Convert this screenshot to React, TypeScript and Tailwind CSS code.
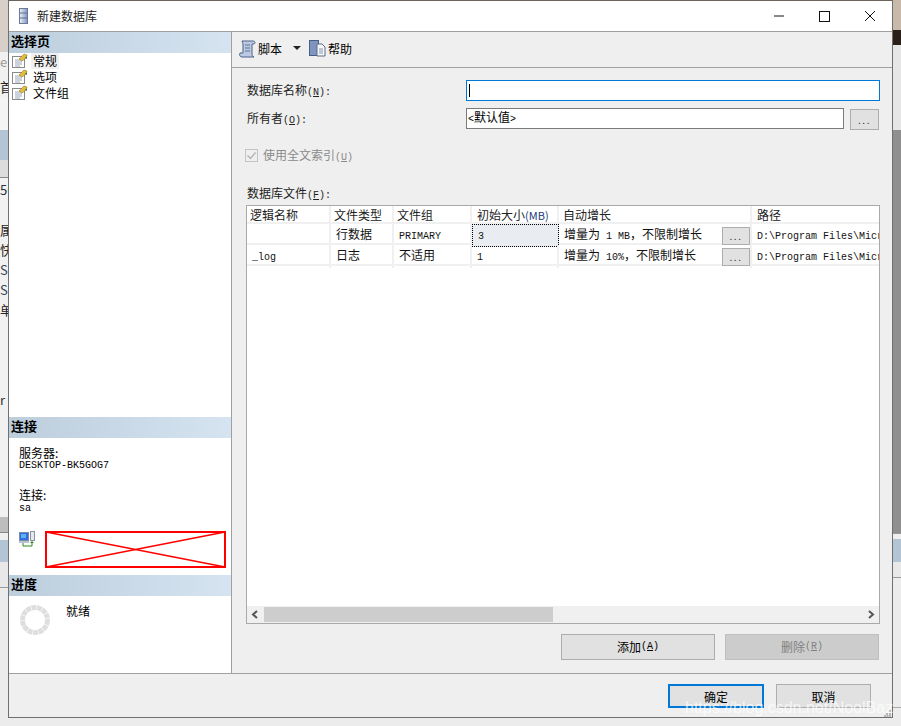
import type { ReactNode } from "react";

const cjk = "font-['Noto_Sans_CJK_SC',sans-serif]";

// half width latin runs, the picture has a 6px per char bitmap font
function M({ children, className = "" }: { children: ReactNode; className?: string }) {
  return <span className={`font-['Liberation_Mono',monospace] text-[10px] ${className}`}>{children}</span>;
}

function Hotkey({ k, colon }: { k: string; colon?: boolean }) {
  return (
    <M>
      (<span className="underline">{k}</span>){colon ? ":" : ""}
    </M>
  );
}

function SectionHeader({ title }: { title: string }) {
  return (
    <div className="h-[21px] shrink-0 bg-gradient-to-r from-[#bccddc] to-[#d6e4f1] pl-[2px] text-[13px] leading-[18px] font-bold text-black">
      {title}
    </div>
  );
}

function PageIcon() {
  return (
    <svg width="16" height="16" viewBox="0 0 16 16" className="shrink-0">
      <rect x="0.5" y="3.5" width="12" height="11" fill="#fff" stroke="#8a8a8a" />
      <path d="M3 7h6M3 9h7M3 11h7M3 13h5" stroke="#9aa7b5" />
      <path d="M7 6l5-5 3 1-1 3-4 3z" fill="#e8b93c" stroke="#8f7a2a" strokeWidth="0.6" />
      <path d="M13 5l2-2v3z" fill="#4a7a3a" />
    </svg>
  );
}

function PageItem({ label, selected }: { label: string; selected?: boolean }) {
  return (
    <div className="flex h-4 items-center pl-[3px]">
      <PageIcon />
      <span className={`ml-[3px] h-4 px-[2px] text-xs leading-4 text-black ${selected ? "bg-[#f0f0f0]" : ""}`}>{label}</span>
    </div>
  );
}

function DbIcon() {
  return (
    <svg width="9" height="16" viewBox="0 0 9 16" className="shrink-0">
      <defs>
        <linearGradient id="dbg" x1="0" x2="1" y1="0" y2="0">
          <stop offset="0" stopColor="#f0f3f8" />
          <stop offset="1" stopColor="#7d93bf" />
        </linearGradient>
      </defs>
      <rect x="0.5" y="0.5" width="8" height="15" fill="url(#dbg)" stroke="#6a7a9a" />
      <path d="M1 5h7M1 10h7" stroke="#5f6f92" />
    </svg>
  );
}

function ScriptIcon() {
  return (
    <svg width="18" height="18" viewBox="0 0 18 18">
      <path d="M3 1h11c2 0 3 2 1 3h-2v9c0 2 0 3 2 4H3c-2 0-3-2-2-4h3V4C4 3 3 2 3 1z" fill="#bcc9e0" stroke="#4f6288" />
      <path d="M6 5h5M6 8h5M6 11h5" stroke="#5f7298" />
    </svg>
  );
}

function HelpIcon() {
  return (
    <svg width="17" height="17" viewBox="0 0 17 17">
      <rect x="0.5" y="0.5" width="9" height="15" fill="#7f95bf" stroke="#4a5d86" />
      <path d="M8 4h5l3 3v9H8z" fill="#f6f7fa" stroke="#5c6a85" />
      <path d="M10 9h4M10 11h4M10 13h4" stroke="#8a97ad" />
    </svg>
  );
}

function ConnIcon() {
  return (
    <svg width="17" height="17" viewBox="0 0 17 17" className="shrink-0">
      <rect x="0.5" y="1.5" width="9" height="8" fill="#2f6fe0" stroke="#7a8aa5" />
      <rect x="2" y="3" width="5" height="4" fill="#5fb0f5" />
      <path d="M0 10h10v2H0z" fill="#b9c2d2" />
      <rect x="11.5" y="0.5" width="4" height="9" fill="#e6e8ee" stroke="#8a93a5" />
      <path d="M4 12v3h9v-4" fill="none" stroke="#2f8a1f" />
      <path d="M11 12l2-2 2 2z" fill="#2f8a1f" />
    </svg>
  );
}

function Spinner() {
  return (
    <svg width="30" height="30" viewBox="0 0 30 30">
      <circle cx="15" cy="15" r="12.500" fill="none" stroke="#dedede" strokeWidth="5" strokeDasharray="4.9 0.6" />
    </svg>
  );
}

function DotsButton({ className = "" }: { className?: string }) {
  return (
    <div className={`flex items-center justify-center border border-[#adadad] bg-[#e1e1e1] text-[10px] leading-none tracking-[1.5px] text-[#333] ${className}`}>
      ...
    </div>
  );
}

const gridCols = "grid grid-cols-[84px_63px_78px_87px_193px_1fr]";

function Cell({ children, className = "" }: { children?: ReactNode; className?: string }) {
  return <div className={`overflow-hidden pl-[5px] text-xs leading-5 whitespace-nowrap text-[#111] ${className}`}>{children}</div>;
}

function GrowCell({ children }: { children: ReactNode }) {
  return (
    <div className="flex items-center justify-between border-r-2 border-[#f0f0f0] pl-[5px] text-xs leading-5 whitespace-nowrap text-[#111]">
      <span>{children}</span>
      <DotsButton className="h-[18px] w-[28px]" />
    </div>
  );
}

function FileRow({ name, type, group, size, grow, focused }: { name?: string; type: string; group: ReactNode; size: string; grow: ReactNode; focused?: boolean }) {
  return (
    <div className={`${gridCols} h-[21px] border-b-2 border-[#f0f0f0]`}>
      <Cell className="border-r-2 border-[#f0f0f0]"><M>{name}</M></Cell>
      <Cell className="border-r-2 border-[#f0f0f0]">{type}</Cell>
      <Cell className="border-r-2 border-[#f0f0f0]">{group}</Cell>
      <Cell className={focused ? "border border-dotted border-black bg-[#e9edf1] pl-[4px] leading-[18px]" : "border-r-2 border-[#f0f0f0] pl-[5px]"}><M>{size}</M></Cell>
      <GrowCell>{grow}</GrowCell>
      <Cell><M>D:\Program Files\Microsoft</M></Cell>
    </div>
  );
}

function LeftStrip() {
  return (
    <div className={`flex h-[726px] w-2 shrink-0 flex-col overflow-hidden bg-[#f1f1f1] text-[13px] leading-5 whitespace-nowrap ${cjk}`}>
      <div className="h-[52px] shrink-0 bg-[#d8cfc8]" />
      <div className="h-5 shrink-0 text-[#999]">e</div>
      <div className="h-[26px] shrink-0 pt-[5px] text-[#222]">首</div>
      <div className="h-[32px] shrink-0 bg-[#f4f4f4]" />
      <div className="h-[30px] shrink-0 bg-[#b3c4d4]" />
      <div className="h-[18px] shrink-0 border-b border-[#888] bg-[#dcdcdc]" />
      <div className="h-[42px] shrink-0 pt-[2px] text-[#234]">5C</div>
      <div className="h-5 shrink-0 text-[#222]">属</div>
      <div className="h-5 shrink-0 text-[#222]">快</div>
      <div className="h-5 shrink-0 text-[#345]">Sc</div>
      <div className="h-5 shrink-0 text-[#345]">Sc</div>
      <div className="h-[90px] shrink-0 text-[#222]">单</div>
      <div className="h-[127px] shrink-0 text-[#333]">r</div>
      <div className="h-[15px] shrink-0 bg-[#bdbdbd]" />
      <div className="h-[8px] shrink-0 border-t border-[#888] bg-[#efefef]" />
      <div className="h-[22px] shrink-0 bg-[#b3c4d4]" />
      <div className="h-[26px] shrink-0 border-b border-[#999] bg-[#e8e8e8]" />
      <div className="flex-1 bg-[#ececec]" />
    </div>
  );
}

function RightStrip() {
  return (
    <div className="flex h-[726px] flex-1 flex-col overflow-hidden">
      <div className="h-[30px] shrink-0 bg-[#c9b9ab]" />
      <div className="h-[15px] shrink-0 bg-[#2b2019]" />
      <div className="h-[85px] shrink-0 bg-[#e6e6e6]" />
      <div className="h-[403px] shrink-0 bg-[#8f8f8f]" />
      <div className="h-[6px] shrink-0 border-t border-[#999] bg-[#efefef]" />
      <div className="h-[23px] shrink-0 bg-[#b3c4d4]" />
      <div className="h-[16px] shrink-0 border-b border-[#999] bg-[#e8e8e8]" />
      <div className="h-[130px] shrink-0 border-b border-[#aaa] bg-[#ececec]" />
      <div className="flex-1 bg-[#ececec]" />
    </div>
  );
}

export default function App() {
  return (
    <div className={`relative flex h-[726px] w-[901px] overflow-hidden bg-[#ececec] text-black ${cjk}`}>
      <LeftStrip />

      <div className="flex h-[718px] w-[885px] shrink-0 flex-col border-x border-b border-x-[#6f6f6f] border-b-[#6f6f6f] border-t border-t-[#6b625c] bg-[#efefef]">
        {/* Title bar */}
        <div className="flex h-[31px] shrink-0 items-center border-b border-[#a0a0a0] bg-white pl-[10px]">
          <DbIcon />
          <span className="ml-[9px] text-xs text-[#222]">新建数据库</span>
          <div className="ml-auto flex items-center">
            <svg width="46" height="30" viewBox="0 0 46 30">
              <path d="M21 15h10" stroke="#111" />
            </svg>
            <svg width="46" height="30" viewBox="0 0 46 30">
              <rect x="20.500" y="10.500" width="10" height="10" fill="none" stroke="#111" />
            </svg>
            <svg width="46" height="30" viewBox="0 0 46 30" className="mr-[1px]">
              <path d="M20 10l10 10M30 10l-10 10" stroke="#111" />
            </svg>
          </div>
        </div>

        <div className="flex min-h-0 flex-1">
          {/* Left panel */}
          <div className="flex w-[223px] shrink-0 flex-col border-r border-[#a0a0a0] bg-white">
            <SectionHeader title="选择页" />
            <div className="flex-1">
              <PageItem label="常规" selected />
              <PageItem label="选项" />
              <PageItem label="文件组" />
            </div>
            <SectionHeader title="连接" />
            <div className="flex h-[137px] shrink-0 flex-col pt-[7px] pl-[10px]">
              <div className="text-xs leading-[15px]">服务器:</div>
              <M className="leading-[12px]">DESKTOP-BK5GOG7</M>
              <div className="mt-[16px] text-xs leading-[14px]">连接:</div>
              <M className="mt-[2px] leading-[10px]">sa</M>
              <div className="mt-[17px] flex items-start">
                <ConnIcon />
                <svg width="181" height="37" viewBox="0 0 181 37" className="ml-[9px]">
                  <rect x="1" y="1" width="179" height="35" fill="#fff" stroke="#f00" strokeWidth="2" />
                  <path d="M1 1L180 36M180 1L1 36" stroke="#f00" strokeWidth="1.600" />
                </svg>
              </div>
            </div>
            <SectionHeader title="进度" />
            <div className="flex h-[77px] shrink-0 pt-[9px] pl-[11px]">
              <Spinner />
              <span className="ml-[16px] text-xs leading-[12px]">就绪</span>
            </div>
          </div>

          {/* Right panel */}
          <div className="flex min-w-0 flex-1 flex-col">
            <div className="flex h-[36px] shrink-0 items-center border-b border-[#a0a0a0] pb-[2px] pl-[7px] text-xs">
              <ScriptIcon />
              <span className="ml-[1px]">脚本</span>
              <svg width="8" height="5" viewBox="0 0 8 5" className="ml-[11px]">
                <path d="M0 0h8L4 4z" fill="#222" />
              </svg>
              <span className="ml-[8px]"><HelpIcon /></span>
              <span className="ml-[2px]">帮助</span>
            </div>

            <div className="flex min-h-0 flex-1 flex-col pr-[12px] pl-[14px]">
              <div className="mt-[12px] flex h-[21px] items-center">
                <span className="w-[220px] pt-[1px] pl-[1px] text-xs text-[#222]">数据库名称<Hotkey k="N" colon /></span>
                <div className="h-[21px] flex-1 border border-[#0078d7] bg-white pt-[3px] pl-[2px]">
                  <div className="h-[13px] w-px bg-black" />
                </div>
              </div>
              <div className="mt-[7px] flex h-[21px] items-center">
                <span className="w-[220px] pt-[1px] pl-[1px] text-xs text-[#222]">所有者<Hotkey k="O" colon /></span>
                <div className="h-[21px] flex-1 border border-[#7a7a7a] bg-white pl-[1px] text-xs leading-[16px]"><M>&lt;</M>默认值<M>&gt;</M></div>
                <DotsButton className="mt-[2px] mr-[1px] ml-[6px] h-[21px] w-[29px]" />
              </div>

              <div className="mt-[19px] flex h-[14px] items-center pt-[1px] text-xs text-[#8a8a8a]">
                <svg width="13" height="13" viewBox="0 0 13 13" className="-ml-[1px]">
                  <rect x="0.500" y="0.500" width="12" height="12" fill="#efefef" stroke="#c4c4c4" />
                  <path d="M2.500 6.500l3 3 5-6" fill="none" stroke="#b5b5b5" strokeWidth="1.500" />
                </svg>
                <span className="ml-[5px]">使用全文索引<Hotkey k="U" /></span>
              </div>

              <div className="mt-[24px] h-[14px] pl-[1px] text-xs leading-[14px] text-[#222]">数据库文件<Hotkey k="F" colon /></div>

              {/* Files grid */}
              <div className="mt-[5px] flex h-[419px] flex-col overflow-hidden border border-[#a9a9a9] bg-white">
                <div className={`${gridCols} h-[18px] shrink-0 border-b-2 border-[#f0f0f0] text-xs leading-[17px] text-[#222]`}>
                  <div className="border-r-2 border-[#f0f0f0] pl-[3px]">逻辑名称</div>
                  <div className="border-r-2 border-[#f0f0f0] pl-[3px]">文件类型</div>
                  <div className="border-r-2 border-[#f0f0f0] pl-[3px]">文件组</div>
                  <div className="border-r-2 border-[#f0f0f0] pl-[5px]">初始大小<span className="text-[11px] text-[#1a3a80]">(MB)</span></div>
                  <div className="border-r-2 border-[#f0f0f0] pl-[4px]">自动增长</div>
                  <div className="pl-[5px]">路径</div>
                </div>
                <FileRow type="行数据" group={<M>PRIMARY</M>} size="3" grow={<>增量为<M> 1 MB</M>，不限制增长</>} focused />
                <FileRow name="_log" type="日志" group="不适用" size="1" grow={<>增量为<M> 10%</M>，不限制增长</>} />
                <div className="flex-1" />
                <div className="flex h-[17px] shrink-0 items-center bg-[#f0f0f0]">
                  <svg width="17" height="17" viewBox="0 0 17 17" className="shrink-0">
                    <path d="M10 5L6 8.500L10 12" fill="none" stroke="#555" strokeWidth="2" />
                  </svg>
                  <div className="h-[15px] w-[289px] bg-[#cdcdcd]" />
                  <svg width="17" height="17" viewBox="0 0 17 17" className="ml-auto shrink-0">
                    <path d="M7 5l4 3.500L7 12" fill="none" stroke="#555" strokeWidth="2" />
                  </svg>
                </div>
              </div>

              <div className="mt-[10px] flex justify-end gap-[10px] pr-[1px]">
                <div className="flex h-[26px] w-[154px] items-center justify-center border border-[#adadad] bg-[#e1e1e1] text-xs">添加<Hotkey k="A" /></div>
                <div className="flex h-[26px] w-[154px] items-center justify-center border border-[#bfbfbf] bg-[#cccccc] text-xs text-[#808080]">删除<Hotkey k="R" /></div>
              </div>
            </div>
          </div>
        </div>

        {/* Footer */}
        <div className="flex h-[44px] shrink-0 items-start justify-end gap-3 border-t border-[#a0a0a0] pt-[10px] pr-[21px]">
          <div className="flex h-[24px] w-[96px] items-center justify-center border-2 border-[#0078d7] bg-[#e1e1e1] pt-[2px] text-xs">确定</div>
          <div className="flex h-[24px] w-[95px] items-center justify-center border border-[#adadad] bg-[#e1e1e1] pt-[2px] text-xs">取消</div>
        </div>
      </div>

      <RightStrip />

      {/* resize grip, sits on the window corner */}
      <svg width="7" height="7" viewBox="0 0 7 7" className="absolute top-[710px] left-[884px]">
        <path d="M5 0h2v2H5zM2 3h2v2H2zM5 3h2v2H5zM0 5h2v2H0zM2.500 5h2v2h-2zM5 5h2v2H5z" fill="#b5b5b5" />
      </svg>

      {/* csdn watermark over the corner */}
      <div className="absolute top-[699px] left-[685px] font-['Liberation_Sans',sans-serif] text-[16px] leading-[18px] whitespace-nowrap text-white/70">
        https://blog.csdn.net/NoolBaz
      </div>
    </div>
  );
}
